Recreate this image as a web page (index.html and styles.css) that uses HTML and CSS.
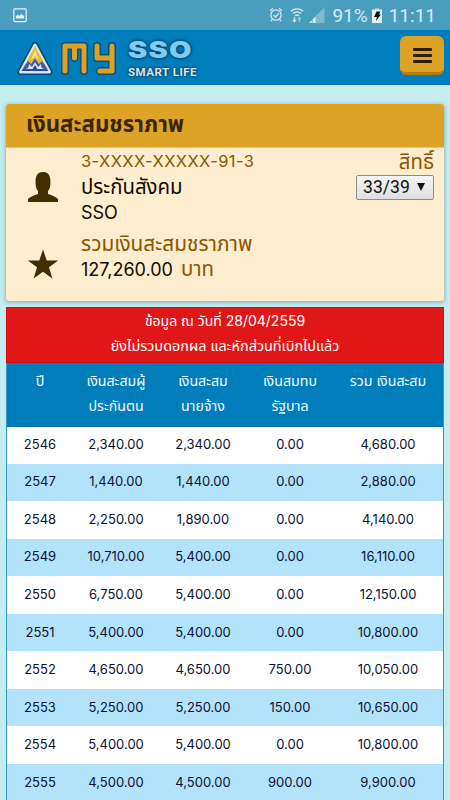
FILE: index.html
```html
<!DOCTYPE html>
<html lang="th">
<head>
    <meta charset="UTF-8">
    <meta name="viewport" content="width=device-width, initial-scale=1.0">
    <title>My SSO Smart Life</title>
    <link rel="stylesheet" href="styles.css">
</head>
<body>
    <div class="status-bar">
        <svg class="icon-picture" width="14" height="15" viewBox="0 0 14 15">
            <rect x="0.8" y="0.8" width="12.4" height="12.8" rx="1" fill="none" stroke="#e3f1f5" stroke-width="1.3"/>
            <path d="M3 10.5V8l2-1.5L6.5 8l2-2.2L10 7.5h1v3z" fill="#e3f1f5"/>
        </svg>
        <div class="status-icons">
            <svg width="14" height="16" viewBox="0 0 14 16" fill="none" stroke="#d5e9ef" stroke-width="1.3">
                <circle cx="7" cy="8" r="5.2"/>
                <path d="M1 3.7 4 1.2M13 3.7 10 1.2M4.5 8l2 2 3.3-3.6M3.4 12.3l-1.7 2M10.6 12.3l1.7 2"/>
            </svg>
            <svg class="icon-wifi" width="14" height="16" viewBox="0 0 14 16" fill="none" stroke="#d5e9ef" stroke-width="1.4">
                <path d="M1 4.2a9 9 0 0 1 12 0M3 6.6a6 6 0 0 1 8 0M5 8.8a3 3 0 0 1 4 0"/>
                <path d="M4.5 10v4.500M2.8 12.800l1.700 1.900 1.700-1.900" stroke-width="1.2"/>
                <path d="M9.500 15v-4.200M8 12.400l1.500-1.800 1.500 1.800" stroke="#9ccbda" stroke-width="1.2"/>
            </svg>
            <svg width="16" height="16" viewBox="0 0 16 16">
                <path d="M0 16 15.5 0v16z" fill="#80b9cd"/>
                <path d="M0 16 2.5 13.5V16zM4 16v-4l2.500-2.500V16z" fill="#e3f1f5"/>
            </svg>
            <span class="battery-level">91%</span>
            <svg class="icon-battery" width="10" height="15" viewBox="0 0 10 15">
                <path d="M0 1.500h3V0h4v1.500h3V15H0z" fill="#e3f1f5"/>
                <path d="M3 0h4v1.500H3z" fill="#92c4d5"/>
                <path d="M4.500 3.500h4L7 6.500h2L4 13l.8-4H2z" fill="#111"/>
            </svg>
            <span class="clock">11:11</span>
        </div>
    </div>

    <header class="navbar">
        <div class="logo">
            <svg class="logo-mark" width="36" height="36" viewBox="0 0 36 36">
                <path d="M18 4 32.500 31H3.500z" stroke="#034a76" stroke-width="6" stroke-linejoin="round"/>
                <path d="M18 4 32.500 31H3.500z" fill="#dce4f2" stroke="#dce4f2" stroke-width="3" stroke-linejoin="round"/>
                <path d="M18 5 26.500 21 22 23 18 16 14 23 9.500 21z" fill="#f3b81f"/>
                <path d="M18 9 22 19 18 15 14 19z" fill="#fbe6a4"/>
                <path d="M8 24l3-4 3 3 4-6 4 6 3-3 3 4 3.500 6h-27z" fill="#3d5caf"/>
                <path d="M8 28c3 0 4-2 4-5l3 3 3-5 3 5 3-3c0 3 1 5 4 5z" fill="#dce4f2"/>
                <path d="M6 28.500h24v1.500H6zM15 29l3-5 3 5z" fill="#26499f"/>
            </svg>
            <svg class="logo-my" width="62" height="38" viewBox="0 0 62 38" fill="none" stroke-linejoin="round" stroke-linecap="round">
                <g stroke="#045284" stroke-width="8">
                    <path d="M5 30V5h19v25M14.500 6v11"/>
                    <path d="M37 5v12h15M52 5v25H40"/>
                </g>
                <g stroke="#dda126" stroke-width="5">
                    <path d="M5 30V5h19v25M14.500 6v11"/>
                    <path d="M37 5v12h15M52 5v25H40"/>
                </g>
            </svg>
            <div class="logo-text">
                <span class="logo-name">SSO</span>
                <span class="logo-tag">SMART LIFE</span>
            </div>
        </div>
        <button class="menu-button" aria-label="Menu">
            <span></span>
            <span></span>
            <span></span>
        </button>
    </header>

    <main>
        <section class="card">
            <h1 class="card-title">เงินสะสมชราภาพ</h1>
            <div class="card-body">
                <div class="info-row">
                    <svg class="info-icon" width="32" height="32" viewBox="0 0 32 32">
                        <path d="M1 31v-3c2-2.500 6-3.500 10-5v-3c-1.500-1.500-2-3.500-2.300-6C8.200 7 9 1 16 1s7.800 6 7.300 13c-.3 2.500-.8 4.500-2.300 6v3c4 1.500 8 2.500 10 5v3z" fill="#432c00"/>
                    </svg>
                    <div class="info-text">
                        <p class="label id-number">3-XXXX-XXXXX-91-3</p>
                        <p class="office">ประกันสังคม</p>
                        <p class="office-code">SSO</p>
                    </div>
                    <div class="rights">
                        <p class="label rights-label">สิทธิ์</p>
                        <button class="select"><span>33/39</span><i class="caret"></i></button>
                    </div>
                </div>
                <div class="info-row total-row">
                    <svg class="info-icon" width="32" height="32" viewBox="0 0 32 32">
                        <path d="M16 1.500 19.700 12.400H31.200L22 19.200 25.400 30.500 16 23.700 6.600 30.500 10 19.200.8 12.400H12.300z" fill="#432c00"/>
                    </svg>
                    <div class="info-text">
                        <p class="label total-label">รวมเงินสะสมชราภาพ</p>
                        <p class="total"><span class="amount">127,260.00</span> <span class="label">บาท</span></p>
                    </div>
                </div>
            </div>
        </section>

        <section class="savings">
            <div class="notice">
                <p class="notice-date">ข้อมูล ณ วันที่ 28/04/2559</p>
                <p class="notice-detail">ยังไม่รวมดอกผล และหักส่วนที่เบิกไปแล้ว</p>
            </div>
            <table class="savings-table">
                <thead>
                    <tr>
                        <th class="col-year">ปี</th>
                        <th class="col-member">เงินสะสมผู้<br>ประกันตน</th>
                        <th class="col-employer">เงินสะสม<br>นายจ้าง</th>
                        <th class="col-state">เงินสมทบ<br>รัฐบาล</th>
                        <th class="col-total">รวม เงินสะสม</th>
                    </tr>
                </thead>
                <tbody>
                    <tr><td>2546</td><td>2,340.00</td><td>2,340.00</td><td>0.00</td><td>4,680.00</td></tr>
                    <tr><td>2547</td><td>1,440.00</td><td>1,440.00</td><td>0.00</td><td>2,880.00</td></tr>
                    <tr><td>2548</td><td>2,250.00</td><td>1,890.00</td><td>0.00</td><td>4,140.00</td></tr>
                    <tr><td>2549</td><td>10,710.00</td><td>5,400.00</td><td>0.00</td><td>16,110.00</td></tr>
                    <tr><td>2550</td><td>6,750.00</td><td>5,400.00</td><td>0.00</td><td>12,150.00</td></tr>
                    <tr><td>2551</td><td>5,400.00</td><td>5,400.00</td><td>0.00</td><td>10,800.00</td></tr>
                    <tr><td>2552</td><td>4,650.00</td><td>4,650.00</td><td>750.00</td><td>10,050.00</td></tr>
                    <tr><td>2553</td><td>5,250.00</td><td>5,250.00</td><td>150.00</td><td>10,650.00</td></tr>
                    <tr><td>2554</td><td>5,400.00</td><td>5,400.00</td><td>0.00</td><td>10,800.00</td></tr>
                    <tr><td>2555</td><td>4,500.00</td><td>4,500.00</td><td>900.00</td><td>9,900.00</td></tr>
                </tbody>
            </table>
        </section>
    </main>
</body>
</html>
```
FILE: styles.css
```css
:root {
    --blue: #007ebc;
    --gold: #dca326;
    --cream: #ffedcf;
    --brown: #8a5700;
    --red: #e11717;
    --stripe: #b3e3fa;
}

* {
    margin: 0;
    padding: 0;
    box-sizing: border-box;
}

body {
    height: 800px;
    overflow: hidden;
    background-color: #c4edf0;
    color: #100b00;
    font-family: Inter, "Noto Sans Thai", sans-serif;
}

.status-bar {
    display: flex;
    justify-content: space-between;
    align-items: center;
    height: 30px;
    padding: 0 14px 0 13px;
    background-color: #499ebe;
    color: #d9ebf1;
    font-family: Roboto, sans-serif;
    font-size: 19px;
}

.status-icons {
    display: flex;
    align-items: center;
}

.status-icons svg {
    margin-right: 7px;
}

.status-icons .icon-wifi {
    margin-right: 5px;
}

.status-icons .icon-battery {
    margin: 0 7px 0 4px;
}

.navbar {
    display: flex;
    justify-content: space-between;
    height: 55px;
    padding: 6px 6px 0 17px;
    background-color: var(--blue);
    border-bottom: 1px solid #006eb4;
}

.logo {
    display: flex;
}

.logo-mark {
    margin-top: 5px;
    overflow: visible;
}

.logo-my {
    margin: 5px 0 0 7px;
    overflow: visible;
}

.logo-text {
    display: flex;
    flex-direction: column;
    align-items: flex-start;
    margin: 2px 0 0 6px;
    text-shadow: 0 0 3px #023a5c, 0 0 3px #023a5c;
}

.logo-name {
    height: 25px;
    line-height: 25px;
    font-weight: 900;
    font-size: 23px;
    letter-spacing: 1px;
    color: #7bcdf4;
    transform: scaleX(1.26);
    transform-origin: left;
}

.logo-tag {
    line-height: 18px;
    font-family: Roboto, sans-serif;
    font-weight: bold;
    font-size: 11.5px;
    letter-spacing: 0.5px;
    color: #dce6ee;
}

.menu-button {
    display: flex;
    flex-direction: column;
    align-items: center;
    gap: 3px;
    width: 44px;
    height: 39px;
    padding-top: 12px;
    border: none;
    border-bottom: 3px solid #b67d0b;
    border-radius: 6px;
    background-color: var(--gold);
}

.menu-button span {
    width: 19px;
    height: 3px;
    border-radius: 1px;
    background-color: #2c1c00;
}

main {
    padding: 19px 6px 0;
}

.card {
    width: 438px;
    height: 197px;
    border-radius: 3px;
    background-color: var(--cream);
    box-shadow: 0 1px 4px rgba(60, 80, 80, 0.5);
}

.card-title {
    height: 44px;
    padding-left: 20px;
    border-bottom: 1px solid #d6c7ac;
    border-radius: 3px 3px 0 0;
    background-color: var(--gold);
    color: #392600;
    font-size: 22.3px;
    line-height: 39px;
}

.card-body {
    padding: 1px 10px 0 21px;
}

.info-row {
    display: flex;
}

.info-icon {
    margin-top: 22px;
    flex-shrink: 0;
}

.info-text {
    flex: 1;
    margin-left: 22px;
    font-size: 18px;
}

.info-text p {
    height: 25px;
    line-height: 25px;
    white-space: nowrap;
}

.label {
    color: var(--brown);
}

.id-number {
    font-size: 16.5px;
    letter-spacing: 0.4px;
}

.office {
    font-size: 20.4px;
}

.office-code {
    padding-top: 1px;
}

.total-label {
    font-size: 20.8px;
}

.total .amount {
    margin-right: 3px;
}

.total .label {
    font-size: 20.4px;
}

.rights {
    display: flex;
    flex-direction: column;
    align-items: flex-end;
}

.rights-label {
    height: 26px;
    line-height: 25px;
    font-size: 20.4px;
}

.select {
    display: flex;
    align-items: center;
    justify-content: space-between;
    width: 78px;
    height: 25px;
    padding: 0 8px 1px 6px;
    border: 1px solid #8b8b8b;
    border-radius: 2px;
    background: linear-gradient(#f6f6f6, #dedede);
    color: #111;
    font-family: Roboto, sans-serif;
    font-size: 17.6px;
}

.caret {
    border: 4px solid transparent;
    border-top: 8px solid #111;
    border-bottom: none;
}

.total-row {
    margin-top: 7px;
}

.total-row .info-icon {
    margin-top: 17px;
}

.savings {
    width: 438px;
    margin-top: 6px;
    border: 1px solid #3496cc;
    border-top: none;
}

.notice {
    height: 56px;
    margin: 0 -1px;
    border: 1px solid #d50d12;
    background-color: var(--red);
    color: #fff;
    font-size: 14.4px;
    line-height: 25px;
    text-align: center;
}

.notice-date {
    font-size: 14px;
}

.savings-table {
    width: 100%;
    table-layout: fixed;
    border-collapse: collapse;
    background-color: #fff;
    color: #0a1033;
    font-size: 13px;
    text-align: center;
}

.savings-table th {
    height: 63px;
    padding-top: 5px;
    border-bottom: 1px solid #006eb4;
    background-color: var(--blue);
    color: #f2faff;
    font-size: 14.2px;
    font-weight: normal;
    line-height: 25px;
    vertical-align: top;
    white-space: nowrap;
}

.savings-table td {
    height: 37.55px;
    padding-bottom: 2px;
    vertical-align: middle;
}

.savings-table tbody tr:nth-child(even) {
    background-color: var(--stripe);
}

.col-year {
    width: 66px;
}

.col-member {
    width: 86px;
}

.col-employer {
    width: 88px;
}

.col-state {
    width: 86px;
}
```
